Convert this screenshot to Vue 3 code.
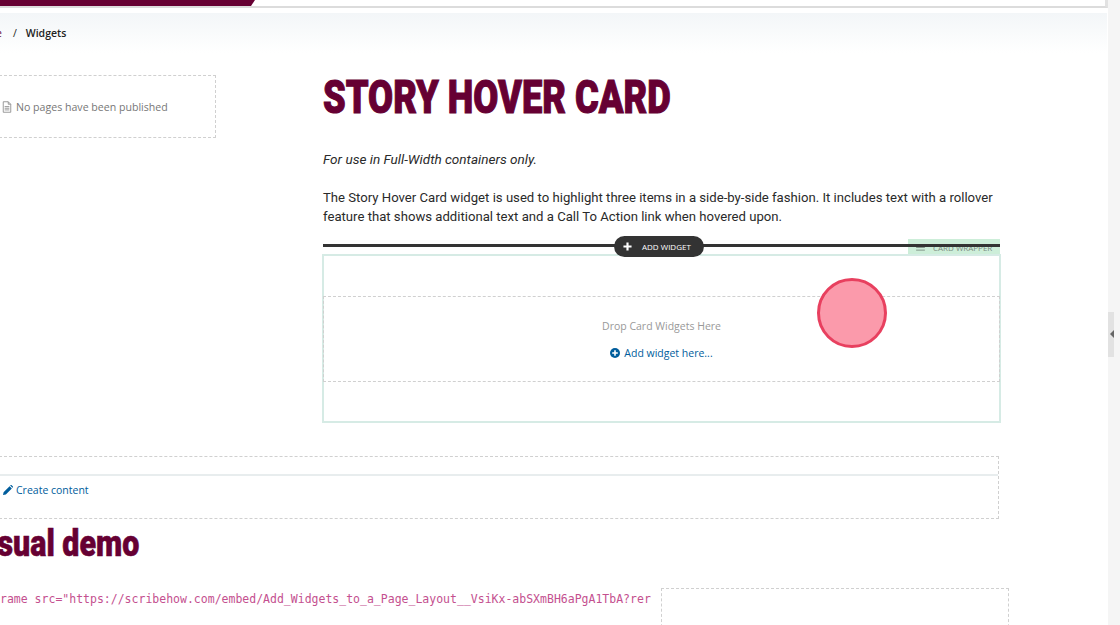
<script setup>
const codeLine = 'rame src="https://scribehow.com/embed/Add_Widgets_to_a_Page_Layout__VsiKx-abSXmBH6aPgA1TbA?rer'
</script>

<template>
  <div class="page">
    <main class="main">
      <header class="topbar"><div class="brand"></div></header>
      <nav class="crumbs">
        <span class="crumb-prev">e</span>
        <span class="crumb-sep">/</span>
        <span class="crumb-current">Widgets</span>
      </nav>

      <div class="columns">
        <aside class="sidebar">
          <div class="empty-pages">
            <svg class="file-icon" viewBox="0 0 12 14" width="10" height="12">
              <path d="M1.5.7h6l3 3v9.6h-9z M7.5.7v3h3" fill="none" stroke="#888" stroke-width="1" />
              <path d="M3.2 6.5h5.6M3.2 8.5h5.6M3.2 10.5h5.6" stroke="#888" stroke-width="1" />
            </svg>
            <span>No pages have been published</span>
          </div>
        </aside>

        <section class="content">
          <h1 class="title"><span class="squeeze">STORY HOVER CARD</span></h1>
          <p class="note">For use in Full-Width containers only.</p>
          <p class="desc">The Story Hover Card widget is used to highlight three items in a side-by-side fashion. It includes text with a rollover feature that shows additional text and a Call To Action link when hovered upon.</p>

          <div class="wrapper-area">
            <div class="tag">
              <svg viewBox="0 0 10 8" width="9" height="7"><path d="M0 1h10M0 4h10M0 7h10" stroke="#7a8a80" stroke-width="1" /></svg>
              <span>CARD WRAPPER</span>
            </div>
            <div class="add-line"></div>
            <div class="add-pill">
              <svg viewBox="0 0 10 10" width="9" height="9"><path d="M5 .5v9M.5 5h9" stroke="#fff" stroke-width="2.4" /></svg>
              <span>ADD WIDGET</span>
            </div>
            <div class="wrapper">
              <div class="dropzone">
                <div class="drop-text">Drop Card Widgets Here</div>
                <div class="add-here">
                  <svg viewBox="0 0 10 10" width="10" height="10">
                    <circle cx="5" cy="5" r="5" fill="#005d9c" />
                    <path d="M5 2.2v5.6M2.2 5h5.6" stroke="#fff" stroke-width="1.6" />
                  </svg>
                  <span>Add widget here...</span>
                </div>
              </div>
            </div>
            <div class="pointer"></div>
          </div>
        </section>
      </div>

      <div class="wide-box">
        <div class="wide-strip"></div>
        <div class="create">
          <svg viewBox="0 0 12 12" width="10" height="10">
            <path d="M0 12l.7-3.4L7.9 1.4l2.7 2.7-7.2 7.2z M8.6.7l.6-.6c.3-.2.6-.2.9 0l1.8 1.8c.2.3.2.6 0 .9l-.6.6z" fill="#005d9c" />
          </svg>
          <span>Create content</span>
        </div>
      </div>

      <h2 class="subtitle"><span class="squeeze">Visual demo</span></h2>

      <div class="bottom">
        <code class="code">{{ codeLine }}</code>
        <div class="preview"></div>
      </div>
    </main>

    <aside class="rail">
      <div class="handle"><i class="arrow"></i></div>
    </aside>
  </div>
</template>

<style>
html, body { margin: 0; background: #fff; overflow: hidden; }
</style>

<style scoped>
.page {
  width: 1120px;
  height: 625px;
  display: flex;
  overflow: hidden;
  background: #fff;
  font-family: "Open Sans", sans-serif;
}
.main { flex: 0 0 1108px; width: 1108px; min-width: 0; overflow: hidden; }
.rail {
  flex: 1;
  background: #f5f5f5;
  display: flex;
  align-items: flex-start;
  padding-top: 312px;
}
.handle {
  width: 6px;
  height: 45px;
  background: #e2e2e2;
  position: relative;
}
.arrow {
  position: absolute;
  left: 2px;
  top: 18px;
  border-style: solid;
  border-width: 4px 4px 4px 0;
  border-color: transparent #666 transparent transparent;
}
.topbar {
  box-sizing: border-box;
  height: 8px;
  width: 1108px;
  background: #fff;
  border-bottom: 2px solid #dcdcdc;
  border-right: 3px solid #e2e2e2;
}
.brand {
  width: 255px;
  height: 6px;
  background: #660033;
  clip-path: polygon(0 0, 100% 0, 251px 100%, 0 100%);
}
.crumbs {
  margin-top: 5px;
  margin-right: 1px;
  height: 40px;
  box-sizing: border-box;
  background: linear-gradient(#f3f6f8, #fff);
  display: flex;
  align-items: center;
  font-size: 10.5px;
  line-height: 14px;
}
.crumb-prev { color: #660033; margin-left: -4px; }
.crumb-sep { color: #222; margin-left: 11px; }
.crumb-current { color: #222; margin-left: 9px; font-weight: 600; }
.columns { display: flex; margin-top: 22px; }
.sidebar { flex: 0 0 217px; margin-left: -1px; margin-right: 107px; }
.empty-pages {
  height: 63px;
  box-sizing: border-box;
  border: 1px dashed #d0d0d0;
  padding-left: 2px;
  display: flex;
  align-items: center;
  gap: 4px;
  font-size: 10.6px;
  color: #777;
}
.file-icon { margin-top: 1px; }
.content { width: 677px; }
.title {
  margin: 0;
  font-family: Roboto, sans-serif;
  font-weight: 900;
  font-size: 47px;
  line-height: 44px;
  color: #660033;
  white-space: nowrap;
}
.squeeze { display: inline-block; transform-origin: left center; }
.title .squeeze { transform: scaleX(.772); -webkit-text-stroke: 1.1px #660033; }
.note, .desc {
  margin: 0;
  font-family: Roboto, sans-serif;
  line-height: 19px;
  color: #2a2a2a;
}
.note { font-style: italic; font-size: 13.55px; margin-top: 31px; }
.desc { font-size: 13.15px; margin-top: 19px; }
.wrapper-area { position: relative; margin-top: 14px; padding-top: 14px; }
.tag {
  position: absolute;
  right: 0;
  top: -1px;
  width: 92px;
  height: 15px;
  background: #cdeed9;
  display: flex;
  align-items: center;
  gap: 8px;
  padding-left: 8px;
  padding-top: 1px;
  box-sizing: border-box;
  font-size: 8px;
  color: #7a8a80;
}
.add-line {
  position: absolute;
  left: 0;
  right: 0;
  top: 4px;
  height: 3px;
  background: #333;
}
.add-pill {
  position: absolute;
  z-index: 1;
  left: 291px;
  top: -4px;
  width: 90px;
  height: 21px;
  border-radius: 11px;
  background: #333;
  color: #fff;
  font-size: 8px;
  display: flex;
  align-items: center;
  gap: 10px;
  padding-left: 9px;
  box-sizing: border-box;
}
.wrapper {
  margin: 0 -1px;
  padding-top: 40px;
  height: 169px;
  box-sizing: border-box;
  border: 2px solid #d6ebe5;
}
.dropzone {
  height: 86px;
  margin: 0 -1px;
  box-sizing: border-box;
  border: 1px dashed #d0d0d0;
  text-align: center;
  font-size: 10.5px;
}
.drop-text { margin-top: 22px; color: #999; line-height: 14px; }
.add-here {
  margin-top: 13px;
  color: #005d9c;
  display: flex;
  justify-content: center;
  align-items: center;
  gap: 4px;
  line-height: 14px;
  font-size: 10.5px;
}
.pointer {
  position: absolute;
  left: 493.7px;
  top: 37.5px;
  width: 70.5px;
  height: 70.5px;
  box-sizing: border-box;
  border-radius: 50%;
  background: #fb9aab;
  border: 3.5px solid #e8405f;
}
.wide-box {
  margin-top: 33px;
  margin-left: -1px;
  width: 1000px;
  height: 63px;
  box-sizing: border-box;
  border: 1px dashed #d0d0d0;
}
.wide-strip { height: 17px; border-bottom: 2px solid #e8edee; }
.create {
  height: 27px;
  padding-left: 3px;
  display: flex;
  align-items: center;
  gap: 3px;
  font-size: 10.5px;
  color: #005d9c;
}
.subtitle {
  margin: 7px 0 0 -31px;
  font-family: Roboto, sans-serif;
  font-size: 36px;
  line-height: 36px;
  font-weight: 900;
  color: #660033;
  white-space: nowrap;
}
.subtitle .squeeze { transform: scaleX(.845); -webkit-text-stroke: .6px #660033; }
.bottom { display: flex; margin-top: 26px; }
.code {
  flex: 0 0 651px;
  overflow: hidden;
  white-space: nowrap;
  font-family: "DejaVu Sans Mono", monospace;
  font-size: 11.5px;
  line-height: 16px;
  color: #c4508f;
  margin-top: 3px;
}
.preview {
  margin-left: 10px;
  width: 348px;
  height: 60px;
  box-sizing: border-box;
  border: 1px dashed #d0d0d0;
}
</style>
